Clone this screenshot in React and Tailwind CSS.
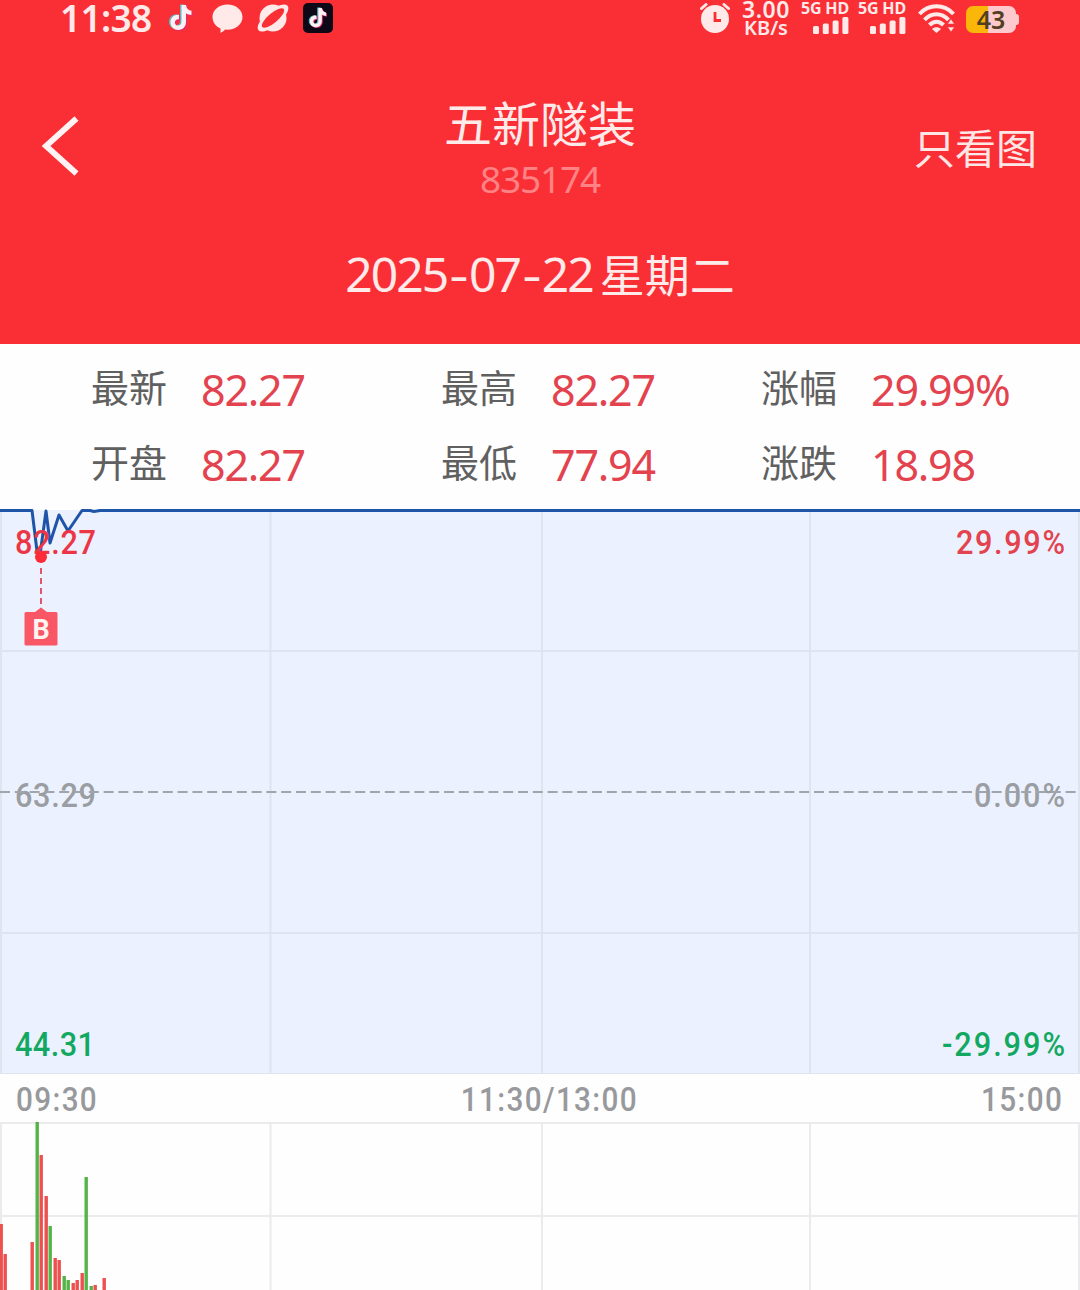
import { clsx } from "clsx";

const quotes = [
  [
    { label: "最新", value: "82.27" },
    { label: "开盘", value: "82.27" },
  ],
  [
    { label: "最高", value: "82.27" },
    { label: "最低", value: "77.94" },
  ],
  [
    { label: "涨幅", value: "29.99%" },
    { label: "涨跌", value: "18.98" },
  ],
];

const columns = [1, 270.5, 542, 810, 1079];

// x, height, direction
const volumes = [
  [1, 66, "up"],
  [5, 36, "up"],
  [32, 48, "up"],
  [37, 168, "down"],
  [41, 135, "up"],
  [46, 94, "up"],
  [50, 64, "down"],
  [55, 32, "up"],
  [59, 30, "up"],
  [64, 14, "down"],
  [68, 10, "down"],
  [73, 7, "up"],
  [77, 10, "up"],
  [82, 17, "up"],
  [86, 113, "down"],
  [91, 4, "down"],
  [95, 5, "up"],
  [104, 12, "up"],
];

const NOTE =
  "M13.5 1h4.500c.4 3.300 2.300 5.500 5.500 5.800v4.200c-2.100 0-3.900-.6-5.500-1.700v8.700c0 4.800-3.400 7.900-7.700 7.900S2.500 22.700 2.500 18.400c0-4.700 3.700-7.900 8.500-7.500v4.400c-2.400-.4-4.100 1-4.100 3.100 0 1.900 1.400 3.200 3.300 3.200 2.100 0 3.300-1.400 3.300-3.800z";

function TikTokNote({ className }) {
  return (
    <svg viewBox="0 0 26 28" className={className}>
      <path d={NOTE} transform="translate(-1.500 -.5)" fill="#5cb9c4" />
      <path d={NOTE} transform="translate(1.200 1)" fill="#e02c72" />
      <path d={NOTE} fill="#fff1f1" />
    </svg>
  );
}

function Signal() {
  return (
    <div className="flex w-[48px] flex-col items-end">
      <span className="flex w-[48px] justify-center whitespace-nowrap text-[16px] font-bold leading-[17px] tracking-[-0.2px]">5G HD</span>
      <svg viewBox="0 0 36 17" className="h-[17px] w-[36px] fill-[#ffe9e9]">
        <rect x="0" y="9" width="6" height="8" rx="1.500" />
        <rect x="9.800" y="6.500" width="6" height="10.500" rx="1.500" />
        <rect x="19.600" y="3.500" width="6" height="13.500" rx="1.500" />
        <rect x="29.400" y="0" width="6" height="17" rx="1.500" />
      </svg>
    </div>
  );
}

function StatusBar() {
  return (
    <div className="flex h-[92px] items-start justify-between pl-[60px] pr-[61px] text-[#ffe9e9]">
      <div className="flex h-[36px] items-center">
        <span className="w-[92px] whitespace-nowrap text-[37px] font-semibold leading-[36px] tracking-[-0.7px]">11:38</span>
        <TikTokNote className="ml-[16px] h-[28px] w-[26px]" />
        <svg viewBox="0 0 30 29" className="ml-[18px] h-[29px] w-[31px]">
          <path d="M15 0.500C23.500 0.500 30 6 30 13S23.500 25.700 15 25.700l-2.500-.1c-1.200 1.700-2.800 2.700-4.800 3.200.5-1.400.6-2.900.2-4.300C3 22.300 0 18 0 13 0 6 6.500.5 15 .5z" fill="#ffe9e9" />
        </svg>
        <svg viewBox="0 0 32 30" className="ml-[14px] h-[30px] w-[32px]">
          <circle cx="16" cy="15" r="13.500" fill="#ffe9e9" />
          <ellipse cx="16" cy="15" rx="19" ry="7.500" transform="rotate(-40 16 15)" fill="#ffe9e9" />
          <ellipse cx="16" cy="15" rx="14" ry="4.800" transform="rotate(-40 16 15)" fill="#fa2f35" />
        </svg>
        <div className="ml-[14px] flex size-[30px] items-center justify-center rounded-[5px] bg-[#0d0716]">
          <TikTokNote className="h-[22px] w-[20px]" />
        </div>
      </div>

      <div className="flex h-[38px] items-start">
        <svg viewBox="0 0 30 31" className="mt-[3px] h-[31px] w-[30px]">
          <circle cx="15" cy="16" r="14" fill="#ffe9e9" />
          <path d="M1.500 5.500 6 1.500M28.500 5.500 24 1.500" stroke="#ffe9e9" strokeWidth="3" strokeLinecap="round" />
          <path d="M15 9v8.500h6" fill="none" stroke="#fa2f35" strokeWidth="2.800" />
        </svg>
        <div className="ml-[11px] flex w-[50px] flex-col items-center whitespace-nowrap">
          <span className="text-[23px] font-semibold leading-[18px] tracking-[0.6px]">3.00</span>
          <span className="text-[20px] font-semibold leading-[20px]">KB/s</span>
        </div>
        <div className="ml-[10px] flex gap-[9px]">
          <Signal />
          <Signal />
        </div>
        <svg viewBox="0 0 38 30" className="ml-[12px] mt-[3px] h-[30px] w-[38px]">
          <g fill="none" stroke="#ffe9e9" strokeWidth="4">
            <path d="M1.500 11C11 .8 26 .8 35.500 11" />
            <path d="M6.500 16.800C13.500 9.500 23.500 9.500 30.500 16.800" />
            <path d="M11.500 22C15.800 17.500 21.200 17.500 25.500 22" />
          </g>
          <path d="M14 26c2.600-2.200 6.400-2.200 9 0L18.500 30z" fill="#ffe9e9" />
          <path d="M33 16l3.500 5h-7zM33 29l3.500-5h-7z" fill="#ffe9e9" stroke="#fa2f35" strokeWidth=".6" />
        </svg>
        <div className="ml-[10px] mt-[6px] flex items-center">
          <div className="flex h-[27px] w-[50px] items-center justify-center rounded-[7px] bg-[linear-gradient(90deg,#fbb60a_44%,#fdc9cd_44%)] text-[25px] font-semibold leading-[27px] text-[#51401f]">
            43
          </div>
          <span className="h-[11px] w-[3px] rounded-r-[3px] bg-[#fdc9cd]" />
        </div>
      </div>
    </div>
  );
}

function Header() {
  return (
    <header className="h-[344px] bg-[#fa2f35]">
      <StatusBar />
      <div className="grid h-[108px] grid-cols-[1fr_auto_1fr] items-center">
        <svg viewBox="0 0 38 60" className="ml-[41px] h-[60px] w-[38px]">
          <path d="M35.500 2.500 5 30 35.500 57.500" fill="none" stroke="#fff3f3" strokeWidth="5.800" />
        </svg>
        <div className="flex flex-col items-center gap-[7px] pt-[3px]">
          <h1 className="text-[48px] leading-[56px] text-[#ffeaea]">五新隧装</h1>
          <p className="text-[37px] leading-[40px] tracking-[-1.2px] text-[#ff8285]">835174</p>
        </div>
        <button className="mr-[43px] justify-self-end pt-[4px] text-[41px] leading-[50px] text-[#ffe6e6]">只看图</button>
      </div>
      <div className="flex justify-center pt-[44px] text-[#ffeaea]">
        <span className="text-[48px] leading-[60px] tracking-[-1.9px]">
          2025<span className="mx-[4px] inline-block scale-x-125">-</span>07<span className="mx-[4px] inline-block scale-x-125">-</span>22
        </span>
        <span className="ml-[7px] pt-[2px] text-[45px] leading-[60px]">星期二</span>
      </div>
    </header>
  );
}

function Quotes() {
  return (
    <section className="grid h-[165px] grid-cols-[350px_320px_1fr] pl-[91px] pt-[8px]">
      {quotes.map((column) => (
        <div key={column[0].label}>
          {column.map(({ label, value }) => (
            <div key={label} className="flex h-[75px] items-center">
              <span className="w-[110px] pb-[6px] text-[38px] leading-[50px] text-[#606060]">{label}</span>
              <span className="text-[43px] leading-[50px] tracking-[-1.2px] text-[#e3434e]">{value}</span>
            </div>
          ))}
        </div>
      ))}
    </section>
  );
}

// condensed numerals on the chart scale
function ScaleLabel({ x, y, width, color, children }) {
  return (
    <text transform={`translate(${x} ${y}) scale(0.93 1)`} textLength={width / 0.93} fill={color}>
      {children}
    </text>
  );
}

function PriceChart() {
  return (
    <svg viewBox="0 0 1080 565" className="block h-[565px] w-[1080px] font-['Roboto',sans-serif] text-[33px] font-medium">
      <rect y="1" width="1080" height="564" fill="#ebf1fe" />
      <g stroke="#dee5ef" strokeWidth="2">
        {columns.map((x) => (
          <line key={x} x1={x} x2={x} y1="2" y2="565" />
        ))}
        <line x1="0" x2="1080" y1="142" y2="142" />
        <line x1="0" x2="1080" y1="424" y2="424" />
        <line x1="0" x2="1080" y1="565" y2="565" />
      </g>

      <path d="M0 1.500H32L37 42 40 46 46 2 50 34 59 6 68 22 82 1.500H90L94 2.500 100 1.500H1080" fill="none" stroke="#1f55a8" strokeWidth="3" strokeLinejoin="round" />

      <ScaleLabel x={15} y={45} width={81} color="#ec3646">82.27</ScaleLabel>
      <ScaleLabel x={956} y={45} width={109} color="#e3434e">29.99%</ScaleLabel>
      <ScaleLabel x={15} y={298} width={81} color="#9a9da2">63.29</ScaleLabel>
      <ScaleLabel x={974} y={298} width={91} color="#9a9da2">0.00%</ScaleLabel>
      <ScaleLabel x={15} y={547} width={80} color="#12a861">44.31</ScaleLabel>
      <ScaleLabel x={942} y={547} width={123} color="#12a861">-29.99%</ScaleLabel>
      <line x1="0" x2="1080" y1="283" y2="283" stroke="#a0a4ab" strokeWidth="2" strokeDasharray="10 4.800" />

      {/* buy marker */}
      <circle cx="41" cy="48" r="6" fill="#fb2b38" />
      <line x1="41" x2="41" y1="59" y2="100" stroke="#e0566a" strokeWidth="2" strokeDasharray="6 4" />
      <path d="M26 103H35L41 98.500 47 103H56Q57.500 103 57.500 104.500V135Q57.500 136.500 56 136.500H26Q24.500 136.500 24.500 135V104.500Q24.500 103 26 103Z" fill="#f95765" />
      <text x="41" y="130" textAnchor="middle" className="text-[27px] font-bold" fill="#fff3f0">B</text>
    </svg>
  );
}

function TimeAxis() {
  return (
    <div className="flex h-[48px] items-center justify-between pl-[16px] pr-[17px] pt-[4px] font-['Roboto',sans-serif] text-[33px] font-medium leading-[40px] tracking-[1.5px] text-[#98999c]">
      <span className="origin-left scale-x-90">09:30</span>
      <span className="ml-[20px] scale-x-90">11:30/13:00</span>
      <span className="origin-right scale-x-90">15:00</span>
    </div>
  );
}

function VolumeChart() {
  return (
    <svg viewBox="0 0 1080 168" className="block h-[168px] w-[1080px]">
      <g stroke="#ebebed" strokeWidth="2">
        {columns.map((x) => (
          <line key={x} x1={x} x2={x} y1="1" y2="168" />
        ))}
        <line x1="0" x2="1080" y1="1" y2="1" />
        <line x1="0" x2="1080" y1="94" y2="94" />
      </g>
      {volumes.map(([x, height, side]) => (
        <rect
          key={x}
          x={x - 1.5}
          y={168 - height}
          width="3.400"
          height={height}
          className={clsx(side === "up" ? "fill-[#ee4f4f]" : "fill-[#55b447]")}
        />
      ))}
    </svg>
  );
}

export default function App() {
  return (
    <main className="h-[1290px] w-[1080px] overflow-hidden bg-[#fefefe] font-['Noto_Sans','Noto_Sans_CJK_SC',sans-serif]">
      <Header />
      <Quotes />
      <PriceChart />
      <TimeAxis />
      <VolumeChart />
    </main>
  );
}
